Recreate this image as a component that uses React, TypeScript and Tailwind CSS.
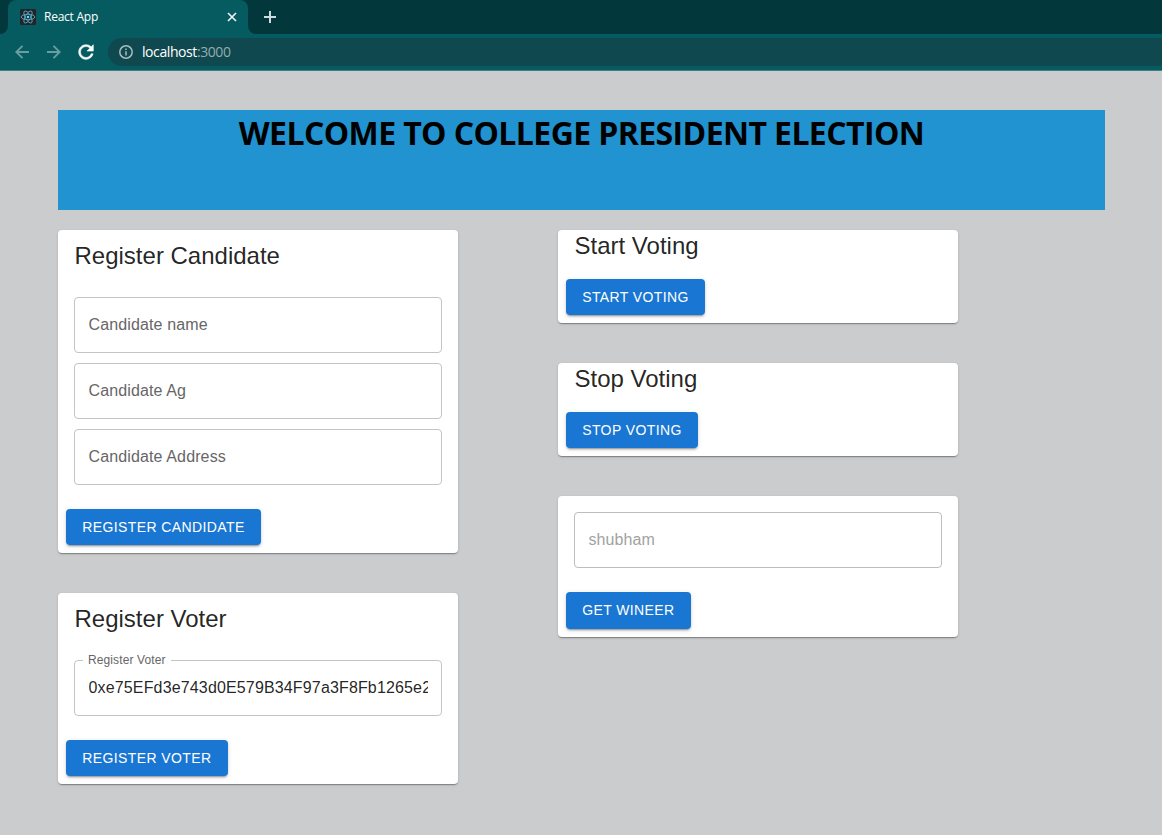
import React from "react";

function ReactLogo() {
  return (
    <svg width="16" height="16" viewBox="0 0 16 16" className="shrink-0">
      <rect width="16" height="16" rx="1.5" fill="#222428" />
      <g fill="none" stroke="#5bb8d4" strokeWidth="0.8">
        <ellipse cx="8" cy="8" rx="6.8" ry="2.7" />
        <ellipse cx="8" cy="8" rx="6.8" ry="2.7" transform="rotate(60 8 8)" />
        <ellipse cx="8" cy="8" rx="6.8" ry="2.7" transform="rotate(120 8 8)" />
      </g>
      <circle cx="8" cy="8" r="1.3" fill="#61dafb" />
    </svg>
  );
}

function BrowserChrome() {
  return (
    <div className="h-[71px] border-b border-[#3f7f83] bg-[#055b60] font-['Open_Sans','Noto_Sans',sans-serif]">
      <div className="flex h-[34px] bg-[#02373c]">
        <svg width="8" height="34" viewBox="0 0 8 34" className="shrink-0">
          <path d="M8 26V34H0A8 8 0 0 0 8 26Z" fill="#055b60" />
        </svg>
        <div className="flex w-[240px] items-center rounded-t-lg bg-[#055b60] pl-3 pr-[11px]">
          <ReactLogo />
          <span className="ml-2 flex-1 text-[12px] leading-4 font-medium tracking-[-0.25px] text-white">React App</span>
          <svg width="10" height="10" viewBox="0 0 10 10">
            <path d="M1 1L9 9M9 1L1 9" stroke="#f2f7f7" strokeWidth="1.6" />
          </svg>
        </div>
        <svg width="8" height="34" viewBox="0 0 8 34" className="shrink-0">
          <path d="M0 26V34H8A8 8 0 0 1 0 26Z" fill="#055b60" />
        </svg>
        <svg width="12" height="34" viewBox="0 0 12 34" className="ml-2">
          <path d="M6 11V23M0 17H12" stroke="#cfdcdd" strokeWidth="2" />
        </svg>
      </div>
      <div className="flex h-9 items-center pl-[15px]">
        <svg width="14" height="14" viewBox="0 0 14 14" fill="none" stroke="#6a9da0" strokeWidth="1.9">
          <path d="M14 7H1.5M7.5 0.8L1.3 7L7.5 13.2" />
        </svg>
        <svg width="14" height="14" viewBox="0 0 14 14" fill="none" stroke="#6a9da0" strokeWidth="1.9" className="ml-[18px]">
          <path d="M0 7H12.5M6.5 0.8L12.7 7L6.5 13.2" />
        </svg>
        <svg width="22" height="22" viewBox="0 0 24 24" fill="#ffffff" stroke="#ffffff" strokeWidth="0.6" className="ml-[14px]">
          <path d="M17.65 6.35C16.2 4.9 14.21 4 12 4c-4.42 0-7.99 3.58-7.99 8s3.57 8 7.99 8c3.73 0 6.84-2.55 7.73-6h-2.08c-.82 2.33-3.04 4-5.65 4-3.31 0-6-2.69-6-6s2.69-6 6-6c1.66 0 3.14.69 4.22 1.78L13 11h7V4l-2.35 2.35z" />
        </svg>
        <div className="ml-[11px] flex h-7 flex-1 items-center rounded-l-full bg-[#0f484e] pl-[11px]">
          <svg width="14" height="14" viewBox="0 0 14 14">
            <circle cx="7" cy="7" r="6.2" fill="none" stroke="#a9bec0" strokeWidth="1.5" />
            <path d="M7 6.2V10.4M7 3.5V5" stroke="#a9bec0" strokeWidth="1.5" />
          </svg>
          <span className="ml-[9px] text-[14px] leading-5 tracking-[-0.42px] text-white">
            localhost<span className="text-[#93adaf]">:3000</span>
          </span>
        </div>
      </div>
    </div>
  );
}

function Card({ children }: { children: React.ReactNode }) {
  return (
    <section className="w-[400px] rounded bg-white shadow-[0_2px_1px_-1px_rgba(0,0,0,0.2),0_1px_1px_0_rgba(0,0,0,0.14),0_1px_3px_0_rgba(0,0,0,0.12)]">
      {children}
    </section>
  );
}

function Title({ children }: { children: React.ReactNode }) {
  return <h2 className="pl-[16.5px] text-2xl leading-8 text-black/87">{children}</h2>;
}

function Field({ placeholder }: { placeholder: string }) {
  return (
    <div className="mx-4 flex h-14 items-center rounded border border-[#c4c4c4] px-[13.5px] text-base tracking-[0.13px] text-[#666666]">
      {placeholder}
    </div>
  );
}

function Button({ children }: { children: React.ReactNode }) {
  return (
    <button className="flex items-start rounded bg-[#1976d2] px-[16.2px] py-1.5 text-sm leading-6 font-normal tracking-[0.4px] text-white uppercase shadow-[0_3px_1px_-2px_rgba(0,0,0,0.2),0_2px_2px_0_rgba(0,0,0,0.14),0_1px_5px_0_rgba(0,0,0,0.12)]">
      {children}
    </button>
  );
}

export default function App() {
  return (
    <div className="h-[835px] w-[1162px] overflow-hidden bg-[#cbccce] font-['Liberation_Sans',Arial,sans-serif]">
      <BrowserChrome />
      <main className="px-[58px] pt-[39px]">
        <header className="h-[100px] w-[1047px] bg-[#2093d0] text-center">
          <h1 className="pt-px font-['Open_Sans','Noto_Sans',sans-serif] text-[32px] leading-[44px] font-bold tracking-[-0.6px] whitespace-nowrap text-black">
            WELCOME TO COLLEGE PRESIDENT ELECTION
          </h1>
        </header>
        <div className="mt-5 flex items-start gap-[100px]">
          <div className="flex flex-col gap-10">
            <Card>
              <div className="pt-2.5">
                <Title>Register Candidate</Title>
              </div>
              <div className="flex flex-col gap-2.5 pt-[25px]">
                <Field placeholder="Candidate name" />
                <Field placeholder="Candidate Ag" />
                <Field placeholder="Candidate Address" />
              </div>
              <div className="flex px-2 pt-6 pb-2">
                <Button>Register Candidate</Button>
              </div>
            </Card>
            <Card>
              <div className="pt-2.5">
                <Title>Register Voter</Title>
              </div>
              <div className="relative mx-4 mt-[25px] flex h-14 items-center rounded border border-[#c4c4c4] px-[13.5px]">
                <span className="absolute top-[-9px] left-[8px] bg-white px-[5px] text-[12px] leading-4 tracking-[0.11px] text-[#666666]">
                  Register Voter
                </span>
                <span className="block overflow-hidden text-base tracking-[0.15px] whitespace-nowrap text-black/87">
                  0xe75EFd3e743d0E579B34F97a3F8Fb1265e2
                </span>
              </div>
              <div className="flex px-2 pt-6 pb-2">
                <Button>Register Voter</Button>
              </div>
            </Card>
          </div>
          <div className="flex flex-col gap-10">
            <Card>
              <Title>Start Voting</Title>
              <div className="flex px-2 pt-[17px] pb-2">
                <Button>Start Voting</Button>
              </div>
            </Card>
            <Card>
              <Title>Stop Voting</Title>
              <div className="flex px-2 pt-[17px] pb-2">
                <Button>Stop Voting</Button>
              </div>
            </Card>
            <Card>
              <div className="pt-4">
                <div className="mx-4 flex h-14 items-center rounded border border-[#bdbdbd] px-[13.5px] text-base tracking-[0.1px] text-[#a2a2a2]">
                  shubham
                </div>
              </div>
              <div className="flex h-[69px] items-stretch px-2 pt-6 pb-2">
                <Button>Get Wineer</Button>
              </div>
            </Card>
          </div>
        </div>
      </main>
    </div>
  );
}
